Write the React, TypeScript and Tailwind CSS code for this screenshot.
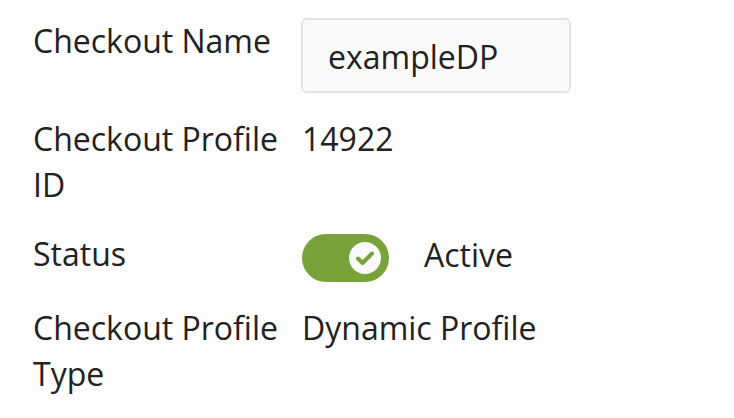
export default function App() {
  return (
    <div
      className="min-h-screen bg-[#fdfdfd] text-[#222222] pl-[33px] pt-[18px]"
      style={{ fontFamily: '"Open Sans", sans-serif' }}
    >
      <div className="grid grid-cols-[269px_1fr] gap-y-[23px] text-[32px] leading-[46px]">
        <div>Checkout Name</div>
        <div>
          <div className="-ml-[1px] w-[270px] h-[75px] rounded-[6px] border-2 border-[#e3e3e3] bg-[#fafafa] pl-[25px] pt-[14px]">
            exampleDP
          </div>
        </div>

        <div>
          Checkout Profile
          <br />
          ID
        </div>
        <div>14922</div>

        <div>Status</div>
        <div className="flex items-start">
          <div className="mt-[3px] w-[87px] h-[48px] rounded-full bg-[#79a33a] flex items-center justify-end pr-[8px]">
            <div className="w-[32px] h-[32px] rounded-full bg-[#fafafa] flex items-center justify-center">
              <svg width="22" height="18" viewBox="0 0 22 18" fill="none">
                <path
                  d="M4 9.5l4.5 4.5L18 4.5"
                  stroke="#79a33a"
                  strokeWidth="4"
                  strokeLinecap="round"
                  strokeLinejoin="round"
                />
              </svg>
            </div>
          </div>
          <div className="ml-[35px] mt-[1px]">Active</div>
        </div>

        <div>
          Checkout Profile
          <br />
          Type
        </div>
        <div>Dynamic Profile</div>
      </div>
    </div>
  );
}
